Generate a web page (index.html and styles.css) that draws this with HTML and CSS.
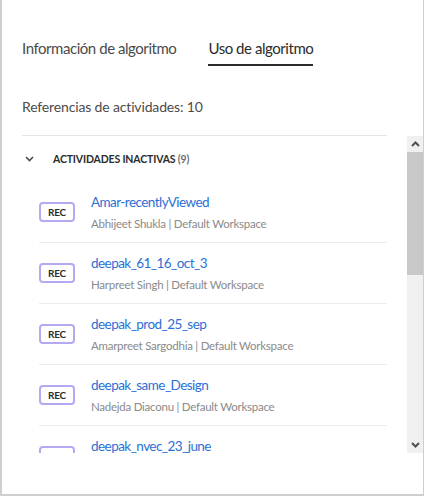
FILE: index.html
```html
<!DOCTYPE html>
<html lang="es">
<head>
<meta charset="utf-8">
<title>Uso de algoritmo</title>
<link rel="stylesheet" href="styles.css">
</head>
<body>
<div class="panel">
  <div class="tabs">
    <div class="tab">Información de algoritmo</div>
    <div class="tab active">Uso de algoritmo</div>
  </div>
  <div class="refs">Referencias de actividades: 10</div>
  <div class="scroller">
    <div class="list">
      <div class="group-head">
        <svg class="chev" width="9" height="6" viewBox="0 0 9 6"><path d="M1 1l3.5 3.5L8 1" fill="none" stroke="#4b4b4b" stroke-width="1.6"/></svg>
        <span class="group-title">ACTIVIDADES INACTIVAS <span class="count">(9)</span></span>
      </div>
      <div class="item">
        <span class="badge">REC</span>
        <div class="info">
          <div class="name">Amar-recentlyViewed</div>
          <div class="meta">Abhijeet Shukla | Default Workspace</div>
        </div>
      </div>
      <div class="item">
        <span class="badge">REC</span>
        <div class="info">
          <div class="name">deepak_61_16_oct_3</div>
          <div class="meta">Harpreet Singh | Default Workspace</div>
        </div>
      </div>
      <div class="item">
        <span class="badge">REC</span>
        <div class="info">
          <div class="name">deepak_prod_25_sep</div>
          <div class="meta">Amarpreet Sargodhia | Default Workspace</div>
        </div>
      </div>
      <div class="item">
        <span class="badge">REC</span>
        <div class="info">
          <div class="name">deepak_same_Design</div>
          <div class="meta">Nadejda Diaconu | Default Workspace</div>
        </div>
      </div>
      <div class="item last">
        <span class="badge">REC</span>
        <div class="info">
          <div class="name">deepak_nvec_23_june</div>
        </div>
      </div>
    </div>
    <div class="scrollbar">
      <div class="sb-btn"><svg width="9" height="6" viewBox="0 0 9 6"><path d="M1 5l3.5-3.5L8 5" fill="none" stroke="#505050" stroke-width="2"/></svg></div>
      <div class="sb-thumb"></div>
      <div class="sb-track"></div>
      <div class="sb-btn"><svg width="9" height="6" viewBox="0 0 9 6"><path d="M1 1l3.5 3.5L8 1" fill="none" stroke="#505050" stroke-width="2"/></svg></div>
    </div>
  </div>
</div>
</body>
</html>
```

FILE: styles.css
```css
html, body {
  margin: 0;
  padding: 0;
  background: #ffffff;
}
body {
  font-family: Lato, "Noto Sans", sans-serif;
  color: #2c2c2c;
}
.panel {
  box-sizing: border-box;
  width: 424px;
  height: 496px;
  border-left: 2px solid #cfcfcf;
  border-right: 1px solid #cfcfcf;
  border-bottom: 2px solid #cfcfcf;
  padding: 38px 0 0 20px;
  display: flex;
  flex-direction: column;
}
.tabs {
  display: flex;
  gap: 32px;
  margin-right: 36px;
}
.tab {
  font-size: 15px;
  line-height: 20px;
  letter-spacing: -0.45px;
  color: #4b4b4b;
  padding-bottom: 6px;
  border-bottom: 2px solid transparent;
}
.tab.active {
  color: #2c2c2c;
  border-bottom-color: #2c2c2c;
}
.refs {
  margin-top: 32px;
  font-size: 14px;
  line-height: 18px;
  letter-spacing: -0.15px;
  color: #4b4b4b;
  padding-bottom: 19px;
  margin-right: 36px;
  border-bottom: 1px solid #e4e4e4;
}
.scroller {
  display: flex;
  height: 317px;
}
.list {
  flex: 1;
  overflow: hidden;
  padding-right: 20px;
}
.group-head {
  height: 46px;
  display: flex;
  align-items: center;
}
.chev {
  margin-left: 3px;
  margin-right: 19px;
}
.group-title {
  font-size: 10.5px;
  font-weight: 700;
  color: #2c2c2c;
  letter-spacing: -0.15px;
}
.count {
  color: #6e6e6e;
}
.item {
  margin-left: 17px;
  height: 60px;
  border-bottom: 1px solid #ececec;
  display: flex;
  align-items: center;
  gap: 16px;
}
.item.last {
  align-items: flex-start;
  padding-top: 10px;
  box-sizing: border-box;
}
.item.last .badge {
  margin-top: 10px;
}
.badge {
  box-sizing: border-box;
  width: 36px;
  height: 20px;
  border: 2px solid #b6a8f0;
  border-radius: 4px;
  font-size: 10px;
  font-weight: 700;
  letter-spacing: -0.2px;
  color: #2c2c2c;
  display: flex;
  align-items: center;
  justify-content: center;
}
.info {
  display: flex;
  flex-direction: column;
  gap: 5px;
  padding-top: 1px;
}
.name {
  font-size: 13.5px;
  line-height: 18px;
  letter-spacing: -0.55px;
  color: #2b6fd6;
}
.meta {
  font-size: 11.5px;
  line-height: 16px;
  letter-spacing: -0.25px;
  color: #8a8a8a;
}
.scrollbar {
  width: 16px;
  display: flex;
  flex-direction: column;
  background: #f0f0f0;
}
.sb-btn {
  height: 16px;
  display: flex;
  align-items: center;
  justify-content: center;
  background: #f0f0f0;
}
.sb-thumb {
  height: 123px;
  background: #c8c8c8;
}
.sb-track {
  flex: 1;
}
```
